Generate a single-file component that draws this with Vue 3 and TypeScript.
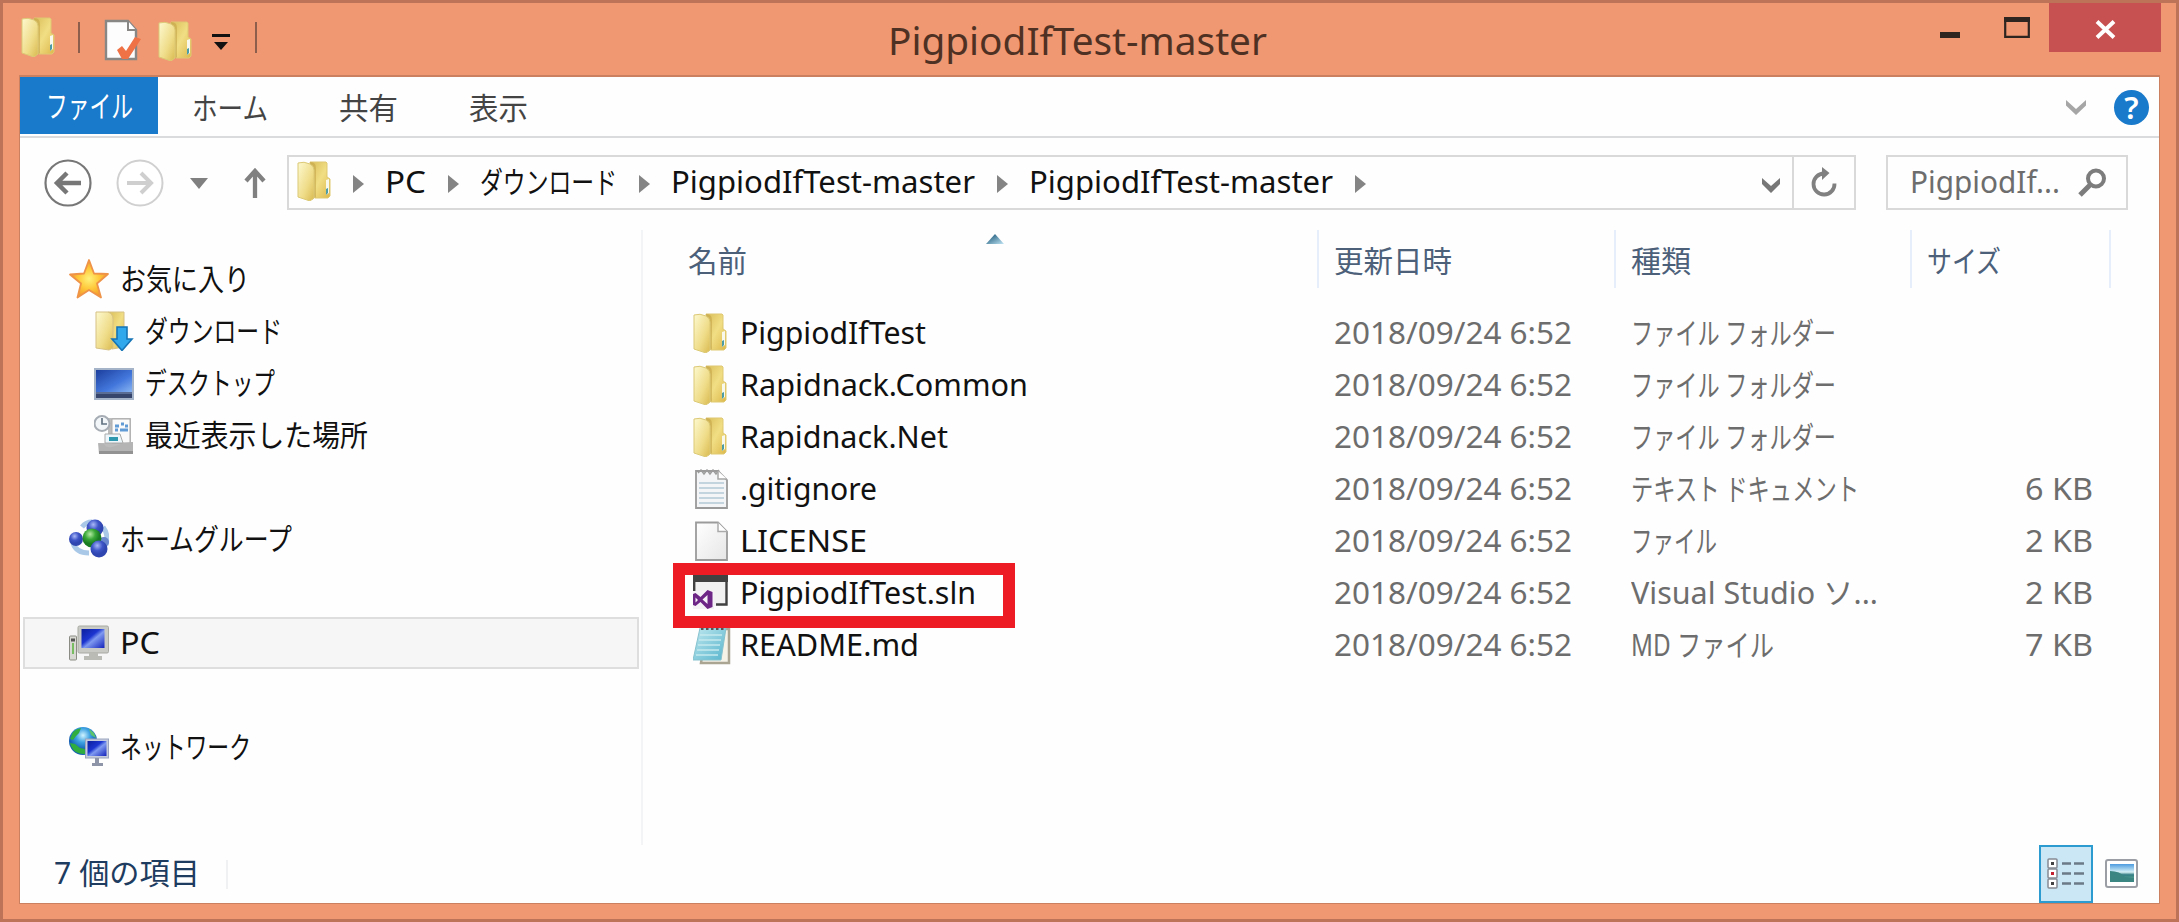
<script setup lang="ts">
import type { Directive } from 'vue'

interface FileRow {
  name: string
  nameWidth: number
  icon: string
  type: string
  typeWidth: number
  size?: string
  marked?: boolean
}

interface NavItem {
  label: string
  width: number
  icon: string
  child?: boolean
  selected?: boolean
}

// Condenses or widens a label horizontally so that it takes up the given width.
const vFit: Directive<HTMLElement, number> = {
  mounted(el, { value }) {
    const natural = el.getBoundingClientRect().width
    el.style.transform = `scaleX(${value / natural})`
    el.style.marginRight = `${value - natural}px`
  },
}

const tabs = [
  { label: 'ホーム', width: 76, gap: 34 },
  { label: '共有', width: 59, gap: 71 },
  { label: '表示', width: 59, gap: 71 },
]

const crumbs = [
  { label: 'PC', width: 41 },
  { label: 'ダウンロード', width: 137 },
  { label: 'PigpiodIfTest-master', width: 304 },
  { label: 'PigpiodIfTest-master', width: 304 },
]

const navGroups: NavItem[][] = [
  [
    { label: 'お気に入り', width: 130, icon: 'star' },
    { label: 'ダウンロード', width: 137, icon: 'download', child: true },
    { label: 'デスクトップ', width: 130, icon: 'desktop', child: true },
    { label: '最近表示した場所', width: 223, icon: 'recent', child: true },
  ],
  [{ label: 'ホームグループ', width: 172, icon: 'homegroup' }],
  [{ label: 'PC', width: 40, icon: 'pc', selected: true }],
  [{ label: 'ネットワーク', width: 131, icon: 'network' }],
]

const modified = '2018/09/24 6:52'

const files: FileRow[] = [
  { name: 'PigpiodIfTest', nameWidth: 186, icon: 'folder', type: 'ファイル フォルダー', typeWidth: 205 },
  { name: 'Rapidnack.Common', nameWidth: 288, icon: 'folder', type: 'ファイル フォルダー', typeWidth: 205 },
  { name: 'Rapidnack.Net', nameWidth: 208, icon: 'folder', type: 'ファイル フォルダー', typeWidth: 205 },
  { name: '.gitignore', nameWidth: 137, icon: 'text', type: 'テキスト ドキュメント', typeWidth: 228, size: '6 KB' },
  { name: 'LICENSE', nameWidth: 127, icon: 'blank', type: 'ファイル', typeWidth: 86, size: '2 KB' },
  { name: 'PigpiodIfTest.sln', nameWidth: 236, icon: 'solution', type: 'Visual Studio ソ...', typeWidth: 247, size: '2 KB', marked: true },
  { name: 'README.md', nameWidth: 179, icon: 'notepad', type: 'MD ファイル', typeWidth: 143, size: '7 KB' },
]
</script>

<template>
  <svg class="defs" width="0" height="0">
    <defs>
      <linearGradient id="gFront" x1="0" y1="0" x2="1" y2="1">
        <stop offset="0" stop-color="#fdf9d0" />
        <stop offset=".6" stop-color="#efdc88" />
        <stop offset="1" stop-color="#d9b94f" />
      </linearGradient>
      <linearGradient id="gBack" x1="0" y1="0" x2="1" y2="1">
        <stop offset="0" stop-color="#d9bd58" />
        <stop offset=".5" stop-color="#f1de84" />
        <stop offset="1" stop-color="#dcb84c" />
      </linearGradient>
      <radialGradient id="gStar">
        <stop offset="0" stop-color="#fff27a" />
        <stop offset=".55" stop-color="#ffc83a" />
        <stop offset="1" stop-color="#f29a2c" />
      </radialGradient>
      <linearGradient id="gScreen" x1="0" y1="0" x2="1" y2="1">
        <stop offset="0" stop-color="#0b1f9c" />
        <stop offset=".4" stop-color="#1c35d0" />
        <stop offset=".55" stop-color="#7f9af0" />
        <stop offset="1" stop-color="#1222bb" />
      </linearGradient>
      <linearGradient id="gDesk" x1="0" y1="0" x2="1" y2="1">
        <stop offset="0" stop-color="#1c3f9e" />
        <stop offset=".6" stop-color="#4377dc" />
        <stop offset="1" stop-color="#88b4f2" />
      </linearGradient>
      <radialGradient id="gBlue" cx=".4" cy=".3">
        <stop offset="0" stop-color="#a9b8f6" />
        <stop offset=".6" stop-color="#3f56c8" />
        <stop offset="1" stop-color="#2f45b0" />
      </radialGradient>
      <radialGradient id="gGreen" cx=".4" cy=".3">
        <stop offset="0" stop-color="#b6eaa4" />
        <stop offset=".55" stop-color="#3aa838" />
        <stop offset="1" stop-color="#1a7c22" />
      </radialGradient>
      <radialGradient id="gGlobe" cx=".5" cy=".3">
        <stop offset="0" stop-color="#d0f3ff" />
        <stop offset=".5" stop-color="#3da2e2" />
        <stop offset="1" stop-color="#1560b4" />
      </radialGradient>
      <linearGradient id="gPaper" x1="0" y1="0" x2="1" y2="1">
        <stop offset="0" stop-color="#ffffff" />
        <stop offset="1" stop-color="#e6e6e6" />
      </linearGradient>
      <linearGradient id="gNote" x1="0" y1="0" x2="1" y2="1">
        <stop offset="0" stop-color="#bfe8ef" />
        <stop offset="1" stop-color="#58b5cd" />
      </linearGradient>
      <linearGradient id="gPhoto" x1="0" y1="0" x2="0" y2="1">
        <stop offset="0" stop-color="#4c9be0" />
        <stop offset=".45" stop-color="#d6f1f5" />
        <stop offset=".6" stop-color="#327d83" />
        <stop offset="1" stop-color="#74bd9b" />
      </linearGradient>
      <linearGradient id="gSort" x1="0" y1="0" x2="1" y2="1">
        <stop offset=".3" stop-color="#3d7593" />
        <stop offset="1" stop-color="#c2e6f5" />
      </linearGradient>
    </defs>

    <symbol id="folder" viewBox="0 0 40 40">
      <path d="M13 1h16l1 1v14l3 2v17l-2 2H18z" fill="url(#gBack)" stroke="#dfc873" stroke-width="1" />
      <path d="M13 1c5 0 6 3 6 7v28l-4 3z" fill="#c5a549" opacity=".6" />
      <path d="M1 2q6-2 12 1q4 2 4 6v28l-4 3L1 36z" fill="url(#gFront)" stroke="#dcc976" stroke-width="1" />
      <path d="M29 19l3-1v14l-3 2z" fill="#f8f8ec" />
      <path d="M29 28l2-1v5l-2 2z" fill="#4b9ca5" />
    </symbol>

    <symbol id="star" viewBox="0 0 40 40">
      <path d="M20 1l5 13.500 14 .5-11 9.500 4 14L20 31 8.500 38.500 12 24.500 1 15.500l14-1z" fill="url(#gStar)" stroke="#ee9348" stroke-width="1.800" stroke-linejoin="round" />
    </symbol>

    <symbol id="download" viewBox="0 0 40 40">
      <path d="M14 1h16v35l-12 2z" fill="url(#gBack)" stroke="#d6c184" />
      <path d="M2 1h12q5 2 5 7v29l-4 2-13-2z" fill="url(#gFront)" stroke="#d6c184" />
      <path d="M23 16h10v12h5L28 39.500 18 28h5z" fill="#31a8ec" stroke="#1674b6" stroke-width="1.600" />
    </symbol>

    <symbol id="desktop" viewBox="0 0 40 40">
      <rect x="0" y="5" width="40" height="32" fill="#a5b3c8" />
      <rect x="2" y="7" width="36" height="22" fill="url(#gDesk)" />
      <rect x="2" y="29" width="36" height="6" fill="#35456c" />
      <path d="M2 30h36" stroke="#8095bb" />
    </symbol>

    <symbol id="recent" viewBox="0 0 40 40">
      <path d="M14 3h23v24h2v12H5V28h9z" fill="#bcbcbc" />
      <path d="M18 4h18v24H18z" fill="#fafafa" stroke="#aaa" />
      <path d="M21 11h4m2-2h3m1 2h3M21 15h3m2 0h8" stroke="#609bd6" stroke-width="3" />
      <path d="M11 19h15l3 9H11z" fill="#edf7fb" stroke="#aaa" />
      <path d="M15 24h9" stroke="#3098ae" stroke-width="4" />
      <path d="M4 28l6 1q2 4 8 3l12-4 9-1v12H5z" fill="#b4b4b4" />
      <path d="M5 36h34v3H5z" fill="#929292" />
      <circle cx="8" cy="8.500" r="7.500" fill="#f3f6f9" stroke="#a7adb4" stroke-width="2" />
      <path d="M8 3v6h5" fill="none" stroke="#637383" stroke-width="1.700" />
    </symbol>

    <symbol id="homegroup" viewBox="0 0 40 40">
      <path d="M4 24q3 10 16 10M34 8q6 8 3 18M13 8q4-5 10-5" fill="none" stroke="#a9c8e8" stroke-width="5" />
      <circle cx="26" cy="9" r="8.500" fill="url(#gBlue)" />
      <circle cx="7" cy="20" r="7" fill="url(#gBlue)" />
      <circle cx="35" cy="23" r="5" fill="#6886cd" />
      <circle cx="23" cy="19" r="9.500" fill="url(#gGreen)" />
      <circle cx="30" cy="30" r="8.500" fill="url(#gBlue)" />
    </symbol>

    <symbol id="pc" viewBox="0 0 40 40">
      <rect x="9" y="3" width="30.500" height="27" rx="1.500" fill="#c9cac5" stroke="#a8a9a3" />
      <rect x="12.500" y="6" width="23" height="19" fill="url(#gScreen)" />
      <path d="M20 30h9v3h4v4H15v-4h5z" fill="#babbb5" />
      <rect x=".5" y="13" width="7" height="24" rx="1" fill="#d7d9d2" stroke="#8b8d85" />
      <path d="M2 17h4" stroke="#555" stroke-width="3" />
      <path d="M4 20v11" stroke="#79bd62" stroke-width="2" />
    </symbol>

    <symbol id="network" viewBox="0 0 40 40">
      <circle cx="14" cy="14" r="14" fill="url(#gGlobe)" />
      <path d="M4 5q3-3 8-4l-2 5-3 3-3 4-3-1zM1 16l5 1 5 4 5 1 1 5q-11 1-15-8z" fill="#2fae3f" />
      <path d="M20 2l5 4 2 5-5-3z" fill="#5ec46b" />
      <rect x="16.500" y="12" width="23" height="19" fill="#c6ccdc" stroke="#9ba5bf" />
      <rect x="18.500" y="14" width="19" height="15" fill="url(#gScreen)" />
      <path d="M26 31h4v5h4v3H23v-3h3z" fill="#8e95a8" />
    </symbol>

    <symbol id="text" viewBox="0 0 40 40">
      <path d="M3 2h22l9 9v28H3z" fill="#f3f5f6" stroke="#9a9a9a" stroke-width="1.800" />
      <path d="M5 4l3-3 3 4 3-4 3 4 3-4 3 4 3-4" fill="none" stroke="#9c9c9c" stroke-width="1.500" />
      <path d="M25 2v8h9" fill="#fff" stroke="#a6a6a6" stroke-width="1.500" />
      <path d="M6 14h25M6 19h25M6 24h25M6 29h25M6 34h25" stroke="#b5c9d8" stroke-width="1.700" />
    </symbol>

    <symbol id="blank" viewBox="0 0 40 40">
      <path d="M3 1.500h22l9 9V39H3z" fill="url(#gPaper)" stroke="#9b9b9b" stroke-width="1.800" />
      <path d="M25 1.500v9h9" fill="#fff" stroke="#aaa" stroke-width="1.500" />
    </symbol>

    <symbol id="solution" viewBox="0 0 40 40">
      <path d="M1 3h33v30H1z" fill="#f1f1f1" />
      <path d="M0 1h35v8H0z" fill="#414141" />
      <path d="M1.200 8v10M33.500 8v23.500H23" fill="none" stroke="#414141" stroke-width="2.400" />
      <path d="M0 18h21v18H0z" fill="#f5f2f6" />
      <path fill-rule="evenodd" d="M0 21l2.500-1 5 4 7-7 5 2v15l-5 2-7-7-5 4L0 32zM2.500 24.500v5l2.500-2.500zM14.500 22l-5 4.500 5 4.500z" fill="#6d2685" />
    </symbol>

    <symbol id="notepad" viewBox="0 0 40 40">
      <path d="M13 4h23v34H8z" fill="#f5f2e8" stroke="#aaa592" stroke-width="2.500" />
      <path d="M7 3h26l-5 32H0z" fill="url(#gNote)" stroke="#86c2ce" />
      <path d="M7 10h22M6 15h22M5 20h22M4 25h22M3 30h22" stroke="#c5e9ee" stroke-width="1.500" />
      <path d="M8 3h24" stroke="#555" stroke-width="4" stroke-dasharray="2.500 2.500" />
    </symbol>
  </svg>

  <div class="window">
    <header class="titlebar">
      <div class="quick">
        <svg class="quick-folder" width="34" height="40"><use href="#folder" width="40" height="40" /></svg>
        <i class="quick-sep"></i>
        <svg class="quick-doc" width="38" height="42" viewBox="0 0 38 42">
          <path d="M2 2h22l8 9v29H2z" fill="#fdfdfd" stroke="#898686" stroke-width="2.400" />
          <path d="M24 2v9h8" fill="#fff" stroke="#898686" stroke-width="2" />
          <path d="M13 31l5-4 4 5 9-14 6 2-13 20h-6z" fill="#ef7146" />
        </svg>
        <svg class="quick-folder second" width="34" height="40"><use href="#folder" width="40" height="40" /></svg>
        <svg class="quick-menu" width="18" height="18" viewBox="0 0 18 18">
          <path d="M0 1.500h18" stroke="#111" stroke-width="3" />
          <path d="M2 8h14l-7 8z" fill="#111" />
        </svg>
        <i class="quick-sep"></i>
      </div>
      <h1 class="title"><span v-fit="379" class="fit">PigpiodIfTest-master</span></h1>
      <div class="controls">
        <svg class="minimize" width="20" height="6"><rect width="20" height="6" fill="#2e2420" /></svg>
        <svg class="maximize" width="26" height="21" viewBox="0 0 26 21">
          <path d="M1.200 1h23.600v18.800H1.200z" fill="none" stroke="#2e2420" stroke-width="2.200" />
          <path d="M0 0h26v5H0z" fill="#2e2420" />
        </svg>
        <button class="close" aria-label="Close">
          <svg width="21" height="19" viewBox="0 0 21 19">
            <path d="M2 1.500l17 16M19 1.500l-17 16" stroke="#fff" stroke-width="4" />
          </svg>
        </button>
      </div>
    </header>

    <div class="client">
      <nav class="ribbon">
        <div class="file-tab"><span v-fit="87" class="fit">ファイル</span></div>
        <div v-for="tab in tabs" :key="tab.label" class="tab" :style="{ marginLeft: tab.gap + 'px' }">
          <span v-fit="tab.width" class="fit">{{ tab.label }}</span>
        </div>
        <svg class="expand" width="22" height="17" viewBox="0 0 22 17">
          <path d="M1 1l10 9 10-9v5.500L11 16 1 6.500z" fill="#a6a6a6" />
        </svg>
        <span class="help">?</span>
      </nav>

      <div class="toolbar">
        <svg class="round" width="48" height="48" viewBox="0 0 48 48">
          <circle cx="24" cy="24" r="22.500" fill="#fff" stroke="#777" stroke-width="2.200" />
          <path d="M37 24H15M23 14L13 24l10 10" fill="none" stroke="#777" stroke-width="4.500" />
        </svg>
        <svg class="round forward" width="48" height="48" viewBox="0 0 48 48">
          <circle cx="24" cy="24" r="22.500" fill="#fff" stroke="#d0d0d0" stroke-width="2" />
          <path d="M11 24h22M25 14l10 10-10 10" fill="none" stroke="#cfcfcf" stroke-width="4" />
        </svg>
        <svg class="history" width="18" height="11" viewBox="0 0 18 11"><path d="M0 0h18l-9 11z" fill="#808080" /></svg>
        <svg class="up" width="22" height="30" viewBox="0 0 22 30">
          <path d="M11 30V4M2 13L11 3l9 10" fill="none" stroke="#808080" stroke-width="4.300" />
        </svg>

        <div class="address">
          <svg class="address-folder" width="34" height="40"><use href="#folder" width="40" height="40" /></svg>
          <svg class="arrow" width="11" height="18" viewBox="0 0 11 18"><path d="M0 0l11 9-11 9z" fill="#848484" /></svg>
          <template v-for="(crumb, i) in crumbs" :key="i">
            <span v-fit="crumb.width" class="fit crumb">{{ crumb.label }}</span>
            <svg class="arrow" width="11" height="18" viewBox="0 0 11 18"><path d="M0 0l11 9-11 9z" fill="#848484" /></svg>
          </template>
          <svg class="drop" width="20" height="17" viewBox="0 0 20 17">
            <path d="M1 1l9 8 9-8v6l-9 9-9-9z" fill="#777" />
          </svg>
          <div class="refresh">
            <svg width="28" height="31" viewBox="0 0 28 31">
              <path d="M14 6.500a10.500 10.500 0 1 0 10.500 10" fill="none" stroke="#808080" stroke-width="3.800" />
              <path d="M12 0l7.500 6-7.500 7z" fill="#808080" />
            </svg>
          </div>
        </div>

        <div class="search">
          <span v-fit="150" class="fit">PigpiodIf...</span>
          <svg width="29" height="29" viewBox="0 0 29 29">
            <circle cx="18" cy="10.500" r="8" fill="none" stroke="#7c7c7c" stroke-width="4" />
            <path d="M12 17L2 27" stroke="#7c7c7c" stroke-width="5" />
          </svg>
        </div>
      </div>

      <main class="body">
        <aside class="sidebar">
          <section v-for="(group, g) in navGroups" :key="g" class="nav-group">
            <div
              v-for="item in group"
              :key="item.label"
              class="nav-item"
              :class="{ child: item.child, selected: item.selected }"
            >
              <svg width="40" height="40"><use :href="'#' + item.icon" width="40" height="40" /></svg>
              <span v-fit="item.width" class="fit">{{ item.label }}</span>
            </div>
          </section>
        </aside>

        <section class="listing">
          <div class="row head">
            <div class="cell name">
              <span v-fit="59" class="fit">名前</span>
              <svg class="sort" width="18" height="10" viewBox="0 0 18 10"><path d="M9 0l9 10H0z" fill="url(#gSort)" /></svg>
            </div>
            <div class="cell"><span v-fit="118" class="fit">更新日時</span></div>
            <div class="cell"><span v-fit="60" class="fit">種類</span></div>
            <div class="cell"><span v-fit="74" class="fit">サイズ</span></div>
          </div>
          <div v-for="file in files" :key="file.name" class="row file">
            <div class="cell name">
              <svg width="40" height="40"><use :href="'#' + file.icon" width="40" height="40" /></svg>
              <span v-fit="file.nameWidth" class="fit">{{ file.name }}</span>
            </div>
            <div class="cell"><span v-fit="238" class="fit">{{ modified }}</span></div>
            <div class="cell"><span v-fit="file.typeWidth" class="fit">{{ file.type }}</span></div>
            <div class="cell size"><span v-if="file.size" v-fit="68" class="fit">{{ file.size }}</span></div>
            <div v-if="file.marked" class="marker"></div>
          </div>
        </section>
      </main>

      <footer class="status">
        <span v-fit="146" class="fit">7 個の項目</span>
        <i class="status-sep"></i>
        <div class="view-details">
          <svg width="38" height="32" viewBox="0 0 38 32">
            <g fill="#fff" stroke="#858b93" stroke-width="1.500">
              <rect x="1" y="1" width="9" height="9" rx="1" />
              <rect x="1" y="11" width="9" height="9" rx="1" />
              <rect x="1" y="21" width="9" height="9" rx="1" />
            </g>
            <path d="M4 5.500h3M4 25.500h3" stroke="#444" stroke-width="3" />
            <path d="M4 15.500h3" stroke="#c22231" stroke-width="3" />
            <path d="M15 5.500h9M27 5.500h10M15 15.500h9M27 15.500h10M15 25.500h9M27 25.500h10" stroke="#6b7a86" stroke-width="2.600" />
          </svg>
        </div>
        <svg class="view-large" width="34" height="30" viewBox="0 0 34 30">
          <rect x="1" y="1" width="31" height="27" rx="2" fill="#fff" stroke="#9c9ea6" stroke-width="2" />
          <rect x="5" y="5" width="24" height="18" fill="url(#gPhoto)" />
          <path d="M5 12q10 0 15 6l9 1v4H5z" fill="#3b8583" />
        </svg>
      </footer>
    </div>
  </div>
</template>

<style>
body {
  margin: 0;
}
</style>

<style scoped>
.defs {
  position: absolute;
}
.window {
  box-sizing: border-box;
  width: 2179px;
  height: 922px;
  padding: 0 16px 16px;
  display: flex;
  flex-direction: column;
  overflow: hidden;
  background: #f09872;
  border: 3px solid #bd7358;
  color: #111;
  font: 30px/40px 'Noto Sans', 'Noto Sans CJK JP', sans-serif;
}
svg {
  display: block;
  flex: none;
}
.fit {
  display: inline-block;
  flex: none;
  white-space: nowrap;
  transform-origin: 0 50%;
}

.titlebar {
  height: 72px;
  flex: none;
  display: grid;
  grid-template-columns: 869px auto 1fr;
}
.quick {
  display: flex;
  align-items: flex-start;
  padding: 14px 0 0 2px;
}
.quick-folder.second {
  margin: 4px 0 0 16px;
}
.quick-sep {
  width: 2px;
  height: 31px;
  margin: 5px 0 0 23px;
  background: #8d5e4c;
}
.quick-doc {
  margin: 2px 0 0 24px;
}
.quick-menu {
  margin: 17px 0 0 20px;
}
.quick-menu + .quick-sep {
  margin-left: 25px;
}
.title {
  margin: 0;
  padding-top: 10px;
  height: 56px;
  color: #4f3124;
  font-size: 37.400px;
  font-weight: 400;
  line-height: 56px;
}
.controls {
  display: flex;
  justify-content: flex-end;
  align-items: flex-start;
}
.minimize {
  margin: 29px 44px 0 0;
}
.maximize {
  margin: 14px 19px 0 0;
}
.close {
  width: 112px;
  height: 49px;
  margin-right: -1px;
  padding: 0;
  border: 0;
  background: #c75050;
  display: flex;
  flex: none;
  align-items: center;
  justify-content: center;
}
.close svg {
  margin-top: 3px;
}

.client {
  flex: 1;
  min-height: 0;
  margin: 0 0 -1px 0;
  display: flex;
  flex-direction: column;
  background: #fefefe;
  border: 2px solid #cb815f;
  border-width: 2px 1px 1px;
}
.ribbon {
  height: 59px;
  flex: none;
  display: flex;
  align-items: center;
  border-bottom: 2px solid #dadbdc;
  color: #444;
}
.file-tab {
  box-sizing: border-box;
  width: 138px;
  height: 57px;
  padding: 9px 0 0 26px;
  align-self: flex-start;
  background: #1979ca;
  color: #fff;
}
.tab {
  padding-top: 3px;
}
.expand {
  margin: 2px 27px 0 auto;
}
.help {
  width: 35px;
  height: 35px;
  margin: 2px 10px 0 0;
  border-radius: 50%;
  background: #1979ca;
  color: #fff;
  font-size: 31px;
  font-weight: 600;
  line-height: 35px;
  text-align: center;
}

.toolbar {
  height: 92px;
  flex: none;
  display: flex;
  align-items: flex-start;
  padding-left: 24px;
}
.round {
  margin-top: 21px;
}
.forward {
  margin-left: 24px;
}
.history {
  margin: 40px 0 0 26px;
}
.up {
  margin: 30px 0 0 36px;
}
.address,
.search {
  box-sizing: border-box;
  height: 55px;
  margin-top: 17px;
  border: 2px solid #d9d9d9;
  display: flex;
  align-items: center;
}
.address {
  width: 1569px;
  margin-left: 21px;
  padding-left: 8px;
}
.address-folder {
  margin: -4px 0 0;
}
.arrow {
  margin: 2px 21px 0 22px;
}
.crumb {
  margin-top: -2px;
}
.drop {
  margin: 5px 11px 0 auto;
}
.refresh {
  width: 60px;
  height: 51px;
  border-left: 2px solid #d9d9d9;
  display: flex;
  align-items: center;
  justify-content: center;
}
.search {
  width: 242px;
  margin-left: 30px;
  padding: 0 19px 0 22px;
  justify-content: space-between;
  color: #6d6d6d;
}
.search .fit {
  margin-top: -2px;
}

.body {
  flex: 1;
  min-height: 0;
  display: flex;
}
.sidebar {
  width: 621px;
  flex: none;
  padding-top: 23px;
  border-right: 2px solid #f3f4f6;
}
.nav-group {
  margin-bottom: 52px;
}
.nav-item {
  box-sizing: border-box;
  width: 616px;
  height: 52px;
  margin-left: 3px;
  padding-left: 46px;
  display: flex;
  align-items: center;
  gap: 11px;
}
.nav-item.child {
  padding-left: 71px;
}
.nav-item .fit {
  margin-top: 0;
}
.nav-item.selected {
  padding-left: 44px;
  background: #f6f6f6;
  border: 2px solid #dedede;
}
.listing {
  flex: 1;
}
.row {
  position: relative;
  display: grid;
  grid-template-columns: 676px 297px 296px 199px;
  height: 52px;
  color: #6d6d6d;
}
.cell {
  display: flex;
  align-items: center;
  padding-left: 15px;
}
.head {
  height: 58px;
  margin-bottom: 19px;
  color: #4c607a;
}
.head .cell {
  border-right: 2px solid #e6eefb;
  padding-top: 4px;
}
.head .name {
  position: relative;
  padding-left: 45px;
}
.sort {
  position: absolute;
  left: 343px;
  top: 4px;
}
.file .name {
  padding-left: 50px;
  gap: 7px;
  color: #111;
}
.file .fit {
  margin-top: 0;
}
.size {
  justify-content: flex-end;
  padding-right: 18px;
}
.marker {
  position: absolute;
  z-index: 1;
  left: 30px;
  top: -4px;
  box-sizing: border-box;
  width: 342px;
  height: 65px;
  border: 12px solid #ed1c24;
}

.status {
  height: 58px;
  flex: none;
  display: flex;
  align-items: center;
  padding-left: 34px;
  color: #1e3c5f;
}
.status .fit {
  margin-top: -2px;
}
.status-sep {
  width: 2px;
  height: 29px;
  margin-left: 26px;
  background: #f0f1f3;
}
.view-details {
  box-sizing: border-box;
  width: 54px;
  height: 58px;
  margin-left: auto;
  border: 2px solid #2c9bd0;
  background: #cbe6f5;
  display: flex;
  align-items: center;
  justify-content: center;
}
.view-large {
  margin: 0 20px 0 12px;
}
</style>
